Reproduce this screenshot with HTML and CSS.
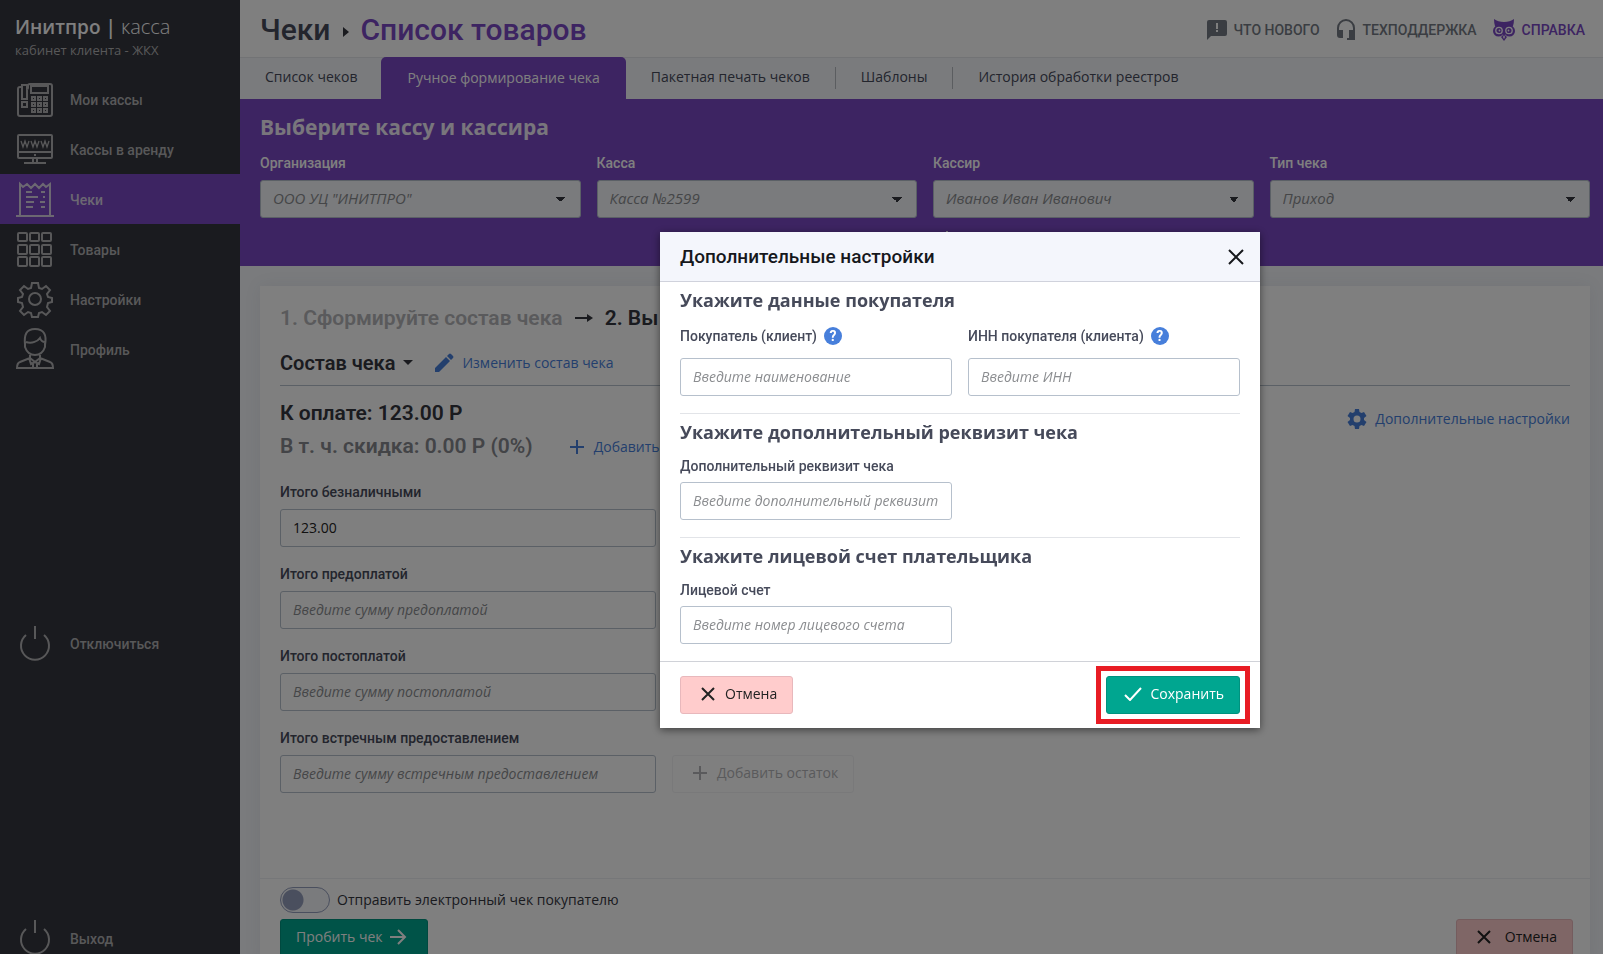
FILE: index.html
```html
<!DOCTYPE html>
<html lang="ru">
<head>
    <meta charset="UTF-8">
    <meta name="viewport" content="width=device-width, initial-scale=1.0">
    <title>Инитпро | касса</title>
    <link rel="stylesheet" href="styles.css">
</head>
<body class="modal-open">

    <div class="app">
        <aside class="sidebar">
            <a class="logo" href="#">
                <span class="logo-name"><b>Инитпро |</b> касса</span>
                <span class="logo-sub">кабинет клиента - ЖКХ</span>
            </a>
            <nav class="menu">
                <a class="menu-item" href="#">
                    <svg width="38" height="38" viewBox="0 0 38 38"><path d="M10 5h-3a1 1 0 0 0-1 1v1h-2a2 2 0 0 0-2 2v25a2 2 0 0 0 2 2h30a2 2 0 0 0 2-2v-28a2 2 0 0 0-2-2h-20a2 2 0 0 0-2 2v2a1 1 0 0 1-1 1M6 5h5v14h-5zM6 22h5v5h-5zM15 6h17v7h-17z"/><path d="M16 17h3v3h-3zM22 17h3v3h-3zM28 17h3v3h-3zM16 23h3v3h-3zM22 23h3v3h-3zM28 23h3v3h-3zM16 29h3v3h-3zM22 29h3v3h-3zM28 29h3v3h-3z"/></svg>
                    <span>Мои кассы</span>
                </a>
                <a class="menu-item" href="#">
                    <svg width="38" height="38" viewBox="0 0 38 38"><path d="M3 5h32a1 1 0 0 1 1 1v21a1 1 0 0 1-1 1h-32a1 1 0 0 1-1-1v-21a1 1 0 0 1 1-1zM2 22h34M17 28v4M21 28v4M8 33h22M18 25h2"/><path d="M5 11l2 6l2-6l2 6l2-6M15 11l2 6l2-6l2 6l2-6M25 11l2 6l2-6l2 6l2-6" stroke-width="1.3"/></svg>
                    <span>Кассы в аренду</span>
                </a>
                <a class="menu-item active" href="#">
                    <svg width="38" height="38" viewBox="0 0 38 38"><path d="M4 35V4l3 3l4-3l4 4l4-4l4 4l4-4l3 3l4-3v31M0 36h38M10 12h6M10 17h12M10 22h8M10 27h7M25 12h4M27 17h2M24 22h5M25 27h4"/></svg>
                    <span>Чеки</span>
                </a>
                <a class="menu-item" href="#">
                    <svg width="38" height="38" viewBox="0 0 38 38"><g><rect x="2" y="3" width="9" height="8" rx="1"/><rect x="14" y="3" width="9" height="8" rx="1"/><rect x="26" y="3" width="9" height="8" rx="1"/><rect x="2" y="15" width="9" height="9" rx="1"/><rect x="14" y="15" width="9" height="9" rx="1"/><rect x="26" y="15" width="9" height="9" rx="1"/><rect x="2" y="27" width="9" height="9" rx="1"/><rect x="14" y="27" width="9" height="9" rx="1"/><rect x="26" y="27" width="9" height="9" rx="1"/></g></svg>
                    <span>Товары</span>
                </a>
                <a class="menu-item" href="#">
                    <svg width="38" height="38" viewBox="0 0 38 38"><path d="M16 3h6l1 5l3 1l4-3l4 4l-3 4l1 3l4 1v4l-4 1l-1 4l3 4l-4 4l-4-3l-3 1l-1 4h-6l-1-4l-3-1l-4 3l-4-4l3-4l-1-4l-4-1v-4l4-1l1-3l-3-4l4-4l4 3l3-1z"/><circle cx="19" cy="19" r="6"/></svg>
                    <span>Настройки</span>
                </a>
                <a class="menu-item" href="#">
                    <svg width="38" height="42" viewBox="0 0 38 42"><path d="M9 17c-1-10 1-16 10-16s12 6 10 16M10 14c6 2 12-1 14-4c1 3 3 4 5 4M9 14v5c2 6 6 8 10 8s8-2 10-8v-5M14 25v5l5 4l5-4v-5M14 30l-10 4q-3 1-3 6h36q0-5-3-6l-10-4M13 30l2 6l4-2l4 2l2-6M17 36v3M21 36v3"/></svg>
                    <span>Профиль</span>
                </a>
                <a class="menu-item push" href="#">
                    <svg width="38" height="38" viewBox="0 0 38 38"><path d="M10 10a14 14 0 1 0 18 0M19 1v13"/></svg>
                    <span>Отключиться</span>
                </a>
                <a class="menu-item push" href="#">
                    <svg width="38" height="38" viewBox="0 0 38 38"><path d="M10 10a14 14 0 1 0 18 0M19 1v13"/></svg>
                    <span>Выход</span>
                </a>
            </nav>
        </aside>

        <main class="main">
            <header class="header">
                <h1 class="page-title">Чеки <i class="crumb"></i> <span>Список товаров</span></h1>
                <div class="header-links">
                    <a href="#">
                        <svg width="20" height="20" viewBox="0 0 20 20"><path fill="currentColor" fill-rule="evenodd" d="M2 0h16a2 2 0 0 1 2 2v12a2 2 0 0 1-2 2H4l-4 4V2a2 2 0 0 1 2-2zM9 3v6h2V3zM9 10v2h2v-2z"/></svg>
                        <span>ЧТО НОВОГО</span>
                    </a>
                    <a href="#">
                        <svg width="20" height="22" viewBox="0 0 20 22"><path fill="none" stroke="currentColor" stroke-width="2" d="M2 14V9a8 8 0 0 1 16 0v11h-7"/><path fill="currentColor" d="M1 11h6v8H4a3 3 0 0 1-3-3zM13 11h6v8h-6z"/></svg>
                        <span>ТЕХПОДДЕРЖКА</span>
                    </a>
                    <a class="help-link" href="#">
                        <svg width="22" height="22" viewBox="0 0 22 22"><path fill="currentColor" d="M1 0q4 3 10 3t10-3q0 4-1 7l-3 6h-3l-3 4l-3-4H5L2 7Q1 4 1 0zM11 15l3 3l-3 4l-3-4z"/><g fill="currentColor"><circle cx="5.500" cy="12" r="5.500"/><circle cx="16.500" cy="12" r="5.500"/></g><g fill="none" stroke="#fff" stroke-width="1.300"><circle cx="6" cy="11.500" r="3.200"/><circle cx="16" cy="11.500" r="3.200"/></g><g fill="#fff"><circle cx="6.500" cy="11.500" r=".9"/><circle cx="15.500" cy="11.500" r=".9"/><path d="M11 16l1 2l-1 2l-1-2z"/></g></svg>
                        <span>СПРАВКА</span>
                    </a>
                </div>
            </header>

            <nav class="tabs">
                <a class="tab" href="#">Список чеков</a>
                <a class="tab active" href="#">Ручное формирование чека</a>
                <a class="tab" href="#">Пакетная печать чеков</a>
                <a class="tab" href="#">Шаблоны</a>
                <a class="tab" href="#">История обработки реестров</a>
            </nav>

            <section class="cashbox">
                <h2>Выберите кассу и кассира</h2>
                <div class="cashbox-grid">
                    <div class="field">
                        <label for="org">Организация</label>
                        <select id="org"><option>ООО УЦ "ИНИТПРО"</option></select>
                    </div>
                    <div class="field">
                        <label for="kassa">Касса</label>
                        <select id="kassa"><option>Касса №2599</option></select>
                    </div>
                    <div class="field">
                        <label for="cashier">Кассир</label>
                        <select id="cashier"><option>Иванов Иван Иванович</option></select>
                        <a class="add-cashier" href="#">
                            <svg width="14" height="14" viewBox="0 0 14 14"><path d="M7 0v14M0 7h14"/></svg>
                            <span>Добавить</span>
                        </a>
                    </div>
                    <div class="field">
                        <label for="type">Тип чека</label>
                        <select id="type"><option>Приход</option></select>
                    </div>
                </div>
            </section>

            <section class="card">
                <div class="card-body">
                    <h2 class="steps">
                        <span class="step-done">1. Сформируйте состав чека</span>
                        <svg width="18" height="10" viewBox="0 0 18 10"><path fill="#34363e" d="M0 4h12V1l6 4l-6 4V6H0z"/></svg>
                        <span>2. Вы</span>
                    </h2>
                    <div class="receipt-head">
                        <h3>Состав чека <i class="caret"></i></h3>
                        <a class="link" href="#">
                            <svg width="20" height="20" viewBox="0 0 20 20"><path fill="currentColor" d="M1 15l11-11l4 4l-11 11H1zM13 3l2-2q1-1 2 0l2 2q1 1 0 2l-2 2z"/></svg>
                            <span>Изменить состав чека</span>
                        </a>
                    </div>
                    <div class="totals">
                        <div>
                            <p class="total">К оплате: 123.00 Р</p>
                            <div class="discount-row">
                                <p class="total discount">В т. ч. скидка: 0.00 Р (0%)</p>
                                <a class="link" href="#">
                                    <svg width="14" height="14" viewBox="0 0 14 14"><path stroke="currentColor" stroke-width="2" d="M7 0v14M0 7h14"/></svg>
                                    <span>Добавить</span>
                                </a>
                            </div>
                        </div>
                        <a class="link extra-link" href="#">
                            <svg width="20" height="20" viewBox="0 0 20 20"><path fill="currentColor" fill-rule="evenodd" d="M8 0h4l.5 3l2 1L17 3l2.500 4L17 9v2l2.500 2l-2.500 4l-2.500-1l-2 1l-.5 3H8l-.5-3l-2-1L3 17l-2.500-4L3 11V9L.5 7L3 3l2.500 1l2-1zM10 6.500a3.500 3.500 0 1 0 0 7a3.500 3.500 0 1 0 0-7z"/></svg>
                            <span>Дополнительные настройки</span>
                        </a>
                    </div>
                    <div class="pay-row field">
                        <label for="cashless">Итого безналичными</label>
                        <input id="cashless" type="text" value="123.00">
                    </div>
                    <div class="pay-row field">
                        <label for="prepaid">Итого предоплатой</label>
                        <input id="prepaid" type="text" placeholder="Введите сумму предоплатой">
                    </div>
                    <div class="pay-row field">
                        <label for="postpaid">Итого постоплатой</label>
                        <input id="postpaid" type="text" placeholder="Введите сумму постоплатой">
                    </div>
                    <div class="pay-row field">
                        <label for="counter">Итого встречным предоставлением</label>
                        <input id="counter" type="text" placeholder="Введите сумму встречным предоставлением">
                        <button class="btn btn-rest" type="button" disabled>
                            <svg width="14" height="14" viewBox="0 0 14 14"><path d="M7 0v14M0 7h14"/></svg>
                            Добавить остаток
                        </button>
                    </div>
                </div>
                <div class="card-footer">
                    <label class="switch">
                        <input type="checkbox">
                        <span>Отправить электронный чек покупателю</span>
                    </label>
                    <div class="card-actions">
                        <button class="btn btn-green" type="button">
                            Пробить чек
                            <svg width="17" height="16" viewBox="0 0 17 16"><path d="M0 8h15M8 1l7 7l-7 7"/></svg>
                        </button>
                        <button class="btn btn-red" type="button">
                            <svg width="14" height="14" viewBox="0 0 14 14"><path d="M1 1l12 12M13 1L1 13"/></svg>
                            Отмена
                        </button>
                    </div>
                </div>
            </section>
        </main>
    </div>

    <div class="overlay">
        <div class="modal" role="dialog" aria-labelledby="modal-title">
            <div class="modal-header">
                <h2 id="modal-title">Дополнительные настройки</h2>
                <button class="close" type="button" aria-label="Закрыть">
                    <svg width="16" height="16" viewBox="0 0 16 16"><path d="M1 1l14 14M15 1L1 15"/></svg>
                </button>
            </div>
            <form class="modal-body">
                <section class="group">
                    <h3>Укажите данные покупателя</h3>
                    <div class="group-grid with-help">
                        <div class="field">
                            <div class="label-row">
                                <label for="buyer">Покупатель (клиент)</label>
                                <button class="help" type="button">?</button>
                            </div>
                            <input id="buyer" type="text" placeholder="Введите наименование">
                        </div>
                        <div class="field">
                            <div class="label-row">
                                <label for="inn">ИНН покупателя (клиента)</label>
                                <button class="help" type="button">?</button>
                            </div>
                            <input id="inn" type="text" placeholder="Введите ИНН">
                        </div>
                    </div>
                </section>
                <section class="group">
                    <h3>Укажите дополнительный реквизит чека</h3>
                    <div class="group-grid">
                        <div class="field">
                            <label for="requisite">Дополнительный реквизит чека</label>
                            <input id="requisite" type="text" placeholder="Введите дополнительный реквизит">
                        </div>
                    </div>
                </section>
                <section class="group">
                    <h3>Укажите лицевой счет плательщика</h3>
                    <div class="group-grid">
                        <div class="field">
                            <label for="account">Лицевой счет</label>
                            <input id="account" type="text" placeholder="Введите номер лицевого счета">
                        </div>
                    </div>
                </section>
            </form>
            <div class="modal-footer">
                <button class="btn btn-red" type="button">
                    <svg width="14" height="14" viewBox="0 0 14 14"><path d="M1 1l12 12M13 1L1 13"/></svg>
                    Отмена
                </button>
                <div class="highlight">
                    <button class="btn btn-green" type="button">
                        <svg width="18" height="14" viewBox="0 0 18 14"><path d="M1 8l5 5L17 1"/></svg>
                        Сохранить
                    </button>
                </div>
            </div>
        </div>
    </div>

</body>
</html>
```
FILE: styles.css
```css
:root {
    --purple: #7a48c4;
    --blue: #477fdb;
    --green: #00a690;
    --dark: #34363e;
    --text: #464a5a;
    --border: #b6c0cc;
    --bg: #f4f6fa;
    --roboto: Roboto, "Liberation Sans", sans-serif;
    --open: "Open Sans", "Noto Sans", sans-serif;
}

* {
    box-sizing: border-box;
}

body {
    margin: 0;
    font-family: var(--open);
    font-size: 14px;
    line-height: 20px;
    color: var(--text);
    background: var(--bg);
}

body.modal-open {
    overflow: hidden;
}

h1, h2, h3, p {
    margin: 0;
}

a {
    color: inherit;
    text-decoration: none;
}

svg {
    flex: none;
}

.app {
    display: flex;
    min-height: calc(100vh + 9px);
}

/* sidebar */

.sidebar {
    display: flex;
    flex-direction: column;
    flex: none;
    width: 240px;
    background: var(--dark);
}

.logo {
    display: flex;
    flex-direction: column;
    height: 74px;
    padding: 14px 15px 0;
    color: #fff;
}

.logo-name {
    font-size: 20px;
    line-height: 25px;
    font-weight: 300;
}

.logo-name b {
    font-weight: 600;
    font-size: 19px;
}

.logo-sub {
    font-size: 13px;
    color: #b0b0b2;
}

.menu {
    display: flex;
    flex-direction: column;
    flex: 1;
}

.menu-item {
    display: flex;
    align-items: center;
    gap: 16px;
    height: 50px;
    padding-left: 16px;
    font: 500 14px/20px var(--roboto);
    color: #b0b0b2;
}

.menu-item svg {
    fill: none;
    stroke: currentColor;
    stroke-width: 2;
}

.menu-item span {
    padding-top: 1px;
}

.menu-item.active {
    background: var(--purple);
    color: #d8d0e4;
}

.menu-item.push {
    margin-top: auto;
}

/* header */

.main {
    display: flex;
    flex-direction: column;
    flex: 1;
    min-width: 0;
}

.header {
    display: flex;
    align-items: center;
    justify-content: space-between;
    height: 57px;
    padding: 2px 18px 0 20px;
    background: #fff;
}

.page-title {
    display: flex;
    align-items: center;
    gap: 12px;
    font: 500 30px/36px var(--roboto);
    color: var(--text);
}

.page-title span {
    color: var(--purple);
}

.crumb {
    border: 5px solid transparent;
    border-left: 6px solid var(--dark);
    border-right: 0;
    margin-top: 4px;
}

.header-links {
    display: flex;
    gap: 16px;
    font: 500 14px/20px var(--roboto);
    color: #757b84;
}

.header-links a {
    display: flex;
    align-items: center;
    gap: 7px;
}

.header-links .help-link {
    color: var(--purple);
}

.tabs {
    display: flex;
    height: 42px;
    border-top: 1px solid #e4e6ea;
}

.tab {
    display: flex;
    align-items: center;
    padding: 0 25px;
    margin-bottom: 3px;
}

.tab + .tab:not(.active) {
    padding-left: 26px;
    background: linear-gradient(#b6bac0, #b6bac0) no-repeat left 9px / 1px 22px;
}

.tab.active {
    margin: -1px 0 0 -1px;
    padding: 0 26px;
    border-radius: 5px 5px 0 0;
    background: var(--purple);
    color: #fff;
}

.tab.active + .tab:not(.active) {
    padding-left: 25px;
    background: none;
}

/* cash register choice */

.cashbox {
    height: 167px;
    padding: 14px 13px 0 20px;
    background: var(--purple);
    color: #fff;
}

.cashbox h2 {
    font-size: 21px;
    line-height: 28px;
    font-weight: 700;
    opacity: .9;
}

.cashbox-grid {
    display: grid;
    grid-template-columns: repeat(4, 1fr);
    gap: 16px;
    margin-top: 12px;
}

.field {
    display: flex;
    flex-direction: column;
}

.field label {
    font: 500 14px/20px var(--roboto);
}

.cashbox .field label {
    margin-bottom: 7px;
}

input[type="text"],
select {
    width: 100%;
    height: 38px;
    padding: 0 12px 2px;
    border: 1px solid var(--border);
    border-radius: 3px;
    background: #fff;
    font-family: var(--open);
    font-size: 14px;
    color: #222;
}

select {
    appearance: none;
    font-size: 15px;
    font-style: italic;
    color: #8b8d90;
    background: linear-gradient(to bottom right, var(--dark) 50%, transparent 50%) no-repeat right 14px center / 5px 5px,
                linear-gradient(to bottom left, var(--dark) 50%, transparent 50%) no-repeat right 19px center / 5px 5px,
                var(--bg);
}

::placeholder {
    font-style: italic;
    color: #8b8d90;
    opacity: 1;
}

.add-cashier {
    display: flex;
    align-items: center;
    gap: 9px;
    margin-top: 10px;
    padding-left: 7px;
}

.add-cashier svg {
    stroke: currentColor;
    stroke-width: 2;
}

/* receipt card */

.card {
    display: flex;
    flex-direction: column;
    flex: 1;
    margin: 20px 13px 0 20px;
    background: #fff;
    box-shadow: 0 0 16px rgba(70, 74, 90, .08);
}

.card-body {
    flex: 1;
    padding: 18px 20px 0;
}

.steps {
    display: flex;
    align-items: center;
    gap: 12px;
    font: 600 21px/28px var(--roboto);
    color: var(--dark);
}

.step-done {
    color: #b4b5b8;
}

.receipt-head {
    display: flex;
    align-items: center;
    gap: 21px;
    height: 54px;
    padding-top: 8px;
    border-bottom: 1px solid var(--border);
}

.receipt-head h3 {
    display: flex;
    align-items: center;
    gap: 8px;
    font: 600 20px/28px var(--roboto);
    color: var(--dark);
}

.caret {
    border: 5px solid transparent;
    border-top-color: var(--dark);
    border-bottom: 0;
}

.link {
    display: flex;
    align-items: center;
    gap: 8px;
    color: var(--blue);
}

.totals {
    display: flex;
    justify-content: space-between;
    align-items: flex-start;
    padding-top: 11px;
    margin-bottom: 19px;
}

.total {
    font: 600 21px/33px var(--roboto);
    color: var(--dark);
}

.total.discount {
    color: #86888e;
}

.discount-row {
    display: flex;
    align-items: center;
    gap: 37px;
}

.discount-row .link {
    gap: 10px;
}

.extra-link {
    margin-top: 12px;
}

.pay-row {
    display: grid;
    grid-template-columns: 376px auto;
    justify-content: start;
    gap: 7px 16px;
    margin-bottom: 17px;
}

.pay-row label {
    grid-column: 1 / -1;
}

.card-footer {
    border-top: 1px solid #eceef2;
    padding: 8px 17px 6px 20px;
}

.switch {
    display: flex;
    align-items: center;
    gap: 7px;
    color: var(--dark);
}

.switch input {
    appearance: none;
    width: 50px;
    height: 26px;
    margin: 0;
    border: 1px solid #949ebc;
    border-radius: 13px;
    background: radial-gradient(circle at 12px 12px, #949ebc 10px, transparent 11px), var(--bg);
}

.card-actions {
    display: flex;
    justify-content: space-between;
    margin-top: 6px;
}

/* buttons */

.btn {
    display: inline-flex;
    align-items: center;
    gap: 10px;
    height: 38px;
    padding: 0 15px 3px 20px;
    border: 1px solid transparent;
    border-radius: 3px;
    font-family: var(--open);
    font-size: 14px;
}

.btn svg,
.close svg {
    fill: none;
    stroke: currentColor;
    stroke-width: 2;
}

.btn-green {
    gap: 8px;
    padding-left: 17px;
    background: var(--green);
    border-color: #00927f;
    color: #fff;
}

.card .btn-green {
    padding: 0 20px 3px 15px;
}

.btn-red {
    background: #ffcccc;
    border-color: #e8b8bc;
    color: #222;
}

.card .btn-red {
    gap: 14px;
}

.btn-rest {
    background: none;
    border-color: #f2f3f5;
    color: #b4b5b8;
}

/* modal */

.overlay {
    position: fixed;
    inset: 0;
    padding: 232px 0 0 317px;
    background: rgba(0, 0, 0, .5);
}

.modal {
    max-width: 600px;
    margin: 0 auto;
    background: #fff;
    box-shadow: 0 2px 8px rgba(0, 0, 0, .5);
}

.modal-header {
    display: flex;
    align-items: center;
    justify-content: space-between;
    height: 50px;
    padding: 0 16px 0 20px;
    border-bottom: 1px solid #d0d2dc;
    background: #f4f6fc;
}

.modal-header h2 {
    padding-top: 1px;
    font: 500 19px/24px var(--roboto);
    color: #16181c;
}

.close {
    display: flex;
    padding: 0;
    border: 0;
    background: none;
    color: #16181c;
}

.modal-body {
    padding: 0 20px;
}

.group {
    padding: 4px 0 17px;
    border-bottom: 1px solid #e2e4e8;
}

.group:last-child {
    border-bottom: 0;
}

.group h3 {
    font-size: 18px;
    line-height: 28px;
    font-weight: 700;
}

.group-grid {
    display: grid;
    grid-template-columns: 1fr 1fr;
    gap: 16px;
    margin-top: 10px;
}

.group .field {
    gap: 6px;
}

.group-grid.with-help {
    margin-top: 12px;
}

.group .with-help .field {
    gap: 12px;
}

.label-row {
    display: flex;
    align-items: center;
    gap: 7px;
}

.help {
    width: 18px;
    height: 18px;
    padding: 0;
    border: 0;
    border-radius: 50%;
    background: var(--blue);
    color: #fff;
    font: 700 14px/18px var(--roboto);
}

.modal-footer {
    display: flex;
    justify-content: space-between;
    padding: 14px 20px;
    border-top: 1px solid #d0d2d8;
}

.highlight {
    outline: 5px solid #e81c24;
    outline-offset: 5px;
}
```
